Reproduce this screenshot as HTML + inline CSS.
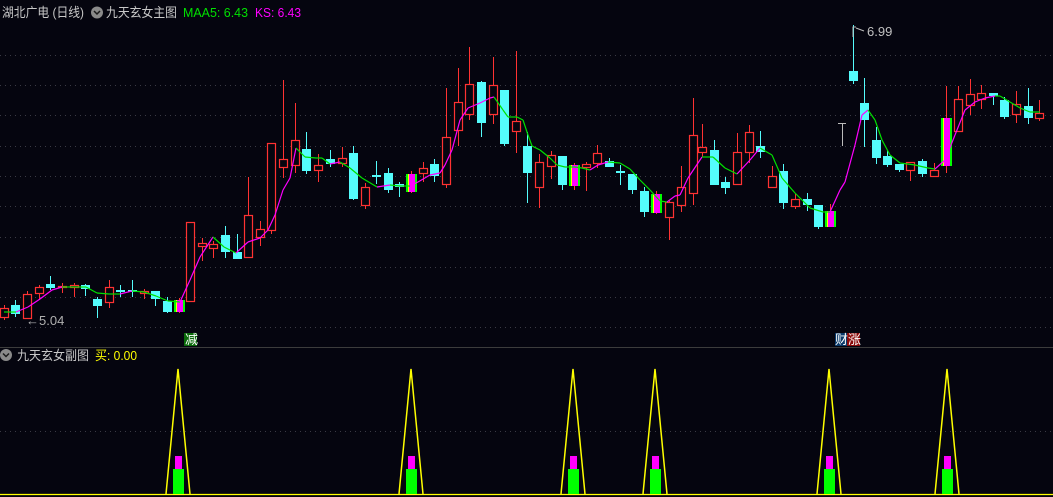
<!DOCTYPE html>
<html><head><meta charset="utf-8"><style>
html,body{margin:0;padding:0;background:#05050f;width:1053px;height:497px;overflow:hidden}
svg{position:absolute;left:0;top:0}
.t{font-family:"Liberation Sans","Noto Sans CJK SC",sans-serif;font-size:13px}
</style></head><body>
<svg id="s" width="1053" height="497" viewBox="0 0 1053 497" xmlns="http://www.w3.org/2000/svg">
<g stroke="#3a3a44" stroke-width="1" stroke-dasharray="1,4">
<line x1="0" y1="55.5" x2="1053" y2="55.5"/><line x1="0" y1="85.5" x2="1053" y2="85.5"/>
<line x1="0" y1="115.5" x2="1053" y2="115.5"/><line x1="0" y1="146.5" x2="1053" y2="146.5"/>
<line x1="0" y1="176.5" x2="1053" y2="176.5"/><line x1="0" y1="206.5" x2="1053" y2="206.5"/>
<line x1="0" y1="237.5" x2="1053" y2="237.5"/><line x1="0" y1="267.5" x2="1053" y2="267.5"/>
<line x1="0" y1="297.5" x2="1053" y2="297.5"/><line x1="0" y1="327.5" x2="1053" y2="327.5"/>
<line x1="0" y1="431.5" x2="1053" y2="431.5"/>
</g>
<line x1="0" y1="347.5" x2="1053" y2="347.5" stroke="#3c3c3c"/>
<g id="c"></g>
<g id="m" fill="none" stroke-width="1.2"></g>
<g id="sub"></g>
<line x1="838" y1="123.5" x2="846" y2="123.5" stroke="#bbb"/><line x1="842.5" y1="124" x2="842.5" y2="146" stroke="#bbb"/>
<text x="2" y="17" class="t" fill="#c8c8c8" textLength="82" lengthAdjust="spacingAndGlyphs">湖北广电 (日线)</text>
<circle cx="97" cy="12.5" r="6" fill="#8a8a8a"/><path d="M94 11l3 3 3-3" stroke="#1a1a1a" stroke-width="1.5" fill="none"/>
<text x="106" y="17" class="t" fill="#c8c8c8" textLength="71" lengthAdjust="spacingAndGlyphs">九天玄女主图</text>
<text x="183" y="17" class="t" fill="#00e000" textLength="65" lengthAdjust="spacingAndGlyphs">MAA5: 6.43</text>
<text x="255" y="17" class="t" fill="#ff00ff" textLength="46" lengthAdjust="spacingAndGlyphs">KS: 6.43</text>
<text x="26" y="325" class="t" fill="#b0b0b0" font-size="12">←5.04</text>
<path d="M853 37V27h3" stroke="#bbb" fill="none"/><line x1="856" y1="28" x2="864" y2="31" stroke="#bbb"/>
<text x="867" y="36" class="t" fill="#c0c0c0" font-size="12">6.99</text>
<rect x="184" y="333" width="13" height="13" fill="#0a6a0a"/>
<text x="185" y="344" class="t" fill="#fff" font-size="12">减</text>
<rect x="835" y="333" width="12" height="13" fill="#0a3a6a"/>
<rect x="847" y="333" width="13" height="13" fill="#8a0a0a"/>
<text x="835" y="344" class="t" fill="#fff" font-size="12">财涨</text>
<circle cx="6" cy="355" r="6" fill="#8a8a8a"/><path d="M3 353.5l3 3 3-3" stroke="#1a1a1a" stroke-width="1.5" fill="none"/>
<text x="17" y="360" class="t" fill="#c8c8c8" textLength="72" lengthAdjust="spacingAndGlyphs">九天玄女副图</text>
<text x="95" y="360" class="t" fill="#ffff00" textLength="42" lengthAdjust="spacingAndGlyphs">买: 0.00</text>
</svg>
<script>
var D=[[0,308,318,305,320,'r'],[11,305,314,300,317,'c'],[23,294,319,291,319,'r'],[35,287,294,285,300,'r'],[46,284,288,276,290,'c'],[58,286,288,283,293,'r'],[70,285,288,283,297,'r'],[81,285,289,284,296,'c'],[93,299,306,297,318,'c'],[105,287,303,280,308,'r'],[116,290,292,285,297,'c'],[128,290,292,280,297,'c'],[140,291,294,289,299,'r'],[151,291,299,291,306,'c'],[163,301,312,297,313,'c'],[174,300,312,298,313,'s'],[186,222,302,222,302,'r'],[198,243,247,238,261,'r'],[209,244,249,241,258,'r'],[221,235,252,226,258,'c'],[233,252,259,234,259,'c'],[244,215,258,177,258,'r'],[256,229,238,221,246,'r'],[267,143,231,143,234,'r'],[279,159,168,80,178,'r'],[291,140,166,103,173,'r'],[302,149,171,132,174,'c'],[314,165,171,154,182,'r'],[326,159,164,150,167,'c'],[338,158,164,147,167,'r'],[349,153,199,146,200,'c'],[361,187,206,183,209,'r'],[372,175,177,161,184,'c'],[384,173,190,168,193,'c'],[395,184,187,182,197,'c'],[406,174,192,171,193,'s'],[419,168,174,162,182,'r'],[430,164,176,159,182,'c'],[442,137,185,88,188,'r'],[454,102,131,68,146,'r'],[465,84,115,47,120,'r'],[477,82,123,81,137,'c'],[489,85,115,57,124,'r'],[500,90,144,90,146,'c'],[512,121,132,51,153,'r'],[523,146,173,132,203,'c'],[535,162,188,154,208,'r'],[547,155,167,151,179,'r'],[558,156,185,156,190,'c'],[569,165,186,163,190,'s'],[582,164,168,162,191,'r'],[593,153,164,145,168,'r'],[605,161,167,158,167,'c'],[616,171,173,165,185,'c'],[628,174,190,174,194,'c'],[640,191,212,187,217,'c'],[651,194,213,191,214,'s'],[665,202,218,201,240,'r'],[677,187,206,166,212,'r'],[689,135,194,98,205,'r'],[698,147,153,124,157,'r'],[710,150,185,140,185,'c'],[721,182,188,177,194,'c'],[733,152,185,133,185,'r'],[745,132,153,125,163,'r'],[756,146,152,131,158,'c'],[768,176,188,166,188,'r'],[779,171,203,164,209,'c'],[791,199,207,193,209,'r'],[803,199,205,193,211,'c'],[814,205,227,205,229,'c'],[825,211,227,204,227,'s'],[849,71,81,25,84,'c'],[860,103,120,78,147,'c'],[872,140,158,127,164,'c'],[883,156,165,150,167,'c'],[895,164,170,164,172,'c'],[906,162,171,162,181,'r'],[918,161,174,159,177,'c'],[930,170,177,163,177,'r'],[941,118,166,86,173,'s'],[954,99,132,86,132,'r'],[966,94,106,79,115,'r'],[977,93,100,85,109,'r'],[989,93,96,93,105,'c'],[1000,100,117,97,119,'c'],[1012,104,115,91,123,'r'],[1024,106,118,88,124,'c'],[1035,113,119,100,121,'r']];
var h='';
D.forEach(function(d){var l=d[0],t=d[1],b=d[2],hi=d[3],lo=d[4],k=d[5];
if(k=='s'){var cx=l+5.5;h+='<line x1="'+cx+'" y1="'+hi+'" x2="'+cx+'" y2="'+lo+'" stroke="#ff3232"/>';
h+='<rect x="'+l+'" y="'+t+'" width="11" height="'+(b-t)+'" fill="#00ff00"/><rect x="'+(l+2)+'" y="'+t+'" width="1" height="'+(b-t)+'" fill="#ffff00"/><rect x="'+(l+3)+'" y="'+t+'" width="6" height="'+(b-t)+'" fill="#ff00ff"/>';return;}
var cx=l+4.5,col=k=='r'?'#ff3232':'#54fcfc';
h+='<line x1="'+cx+'" y1="'+hi+'" x2="'+cx+'" y2="'+lo+'" stroke="'+col+'"/>';
var hh=Math.max(b-t,1);
if(k=='r')h+='<rect x="'+(l+.5)+'" y="'+(t+.5)+'" width="8" height="'+Math.max(hh-1,1)+'" fill="#05050f" stroke="'+col+'" stroke-width="1.2"/>';
else h+='<rect x="'+l+'" y="'+t+'" width="9" height="'+hh+'" fill="'+col+'"/>';});
document.getElementById('c').innerHTML=h;
var P=[[4,312],[16,312],[28,307],[40,299],[52,290],[62,287],[74,287],[86,287],[97,293],[109,294],[120,294],[132,291],[144,292],[156,296],[168,301],[180,302],[190,280],[200,257],[213,237],[224,247],[236,253],[248,242],[260,238],[268,230],[275,215],[283,190],[290,178],[296,148],[305,157],[316,158],[322,158],[330,164],[340,162],[350,168],[362,178],[377,187],[390,185],[400,186],[410,186],[418,182],[430,175],[440,173],[445,165],[452,150],[460,120],[468,108],[480,103],[490,98],[494,97],[503,110],[508,117],[517,117],[523,120],[528,135],[532,146],[540,150],[550,158],[557,165],[565,167],[575,167],[582,168],[590,170],[598,165],[608,162],[620,163],[630,169],[640,180],[650,190],[660,201],[667,202],[675,196],[680,195],[688,178],[702,157],[713,157],[725,168],[737,174],[750,160],[760,148],[772,155],[782,178],[795,193],[810,208],[823,212],[830,212],[840,190],[845,182],[855,145],[862,115],[868,110],[875,120],[882,140],[890,155],[900,163],[915,165],[928,168],[935,169],[945,160],[955,135],[965,110],[975,102],[985,98],[995,96],[1000,96],[1010,102],[1020,108],[1030,112],[1040,112]];
var m='';for(var i=1;i<P.length;i++){var a=P[i-1],b=P[i];m+='<line x1="'+a[0]+'" y1="'+a[1]+'" x2="'+b[0]+'" y2="'+b[1]+'" stroke="'+(b[1]<a[1]?'#ff00ff':'#00e000')+'"/>';}
document.getElementById('m').innerHTML=m;
var s='<line x1="0" y1="494.5" x2="1053" y2="494.5" stroke="#ffff00" stroke-width="1.2"/>';
[178,411,573,655,829,947].forEach(function(c){
s+='<rect x="'+(c-5)+'" y="469" width="11" height="25" fill="#00ff00"/><rect x="'+(c-3)+'" y="456" width="7" height="13" fill="#ff00ff"/>';
s+='<polyline points="'+(c-12)+',494 '+c+',369 '+(c+12)+',494" fill="none" stroke="#ffff00" stroke-width="1.5"/>';});
document.getElementById('sub').innerHTML=s;
</script>
</body></html>
